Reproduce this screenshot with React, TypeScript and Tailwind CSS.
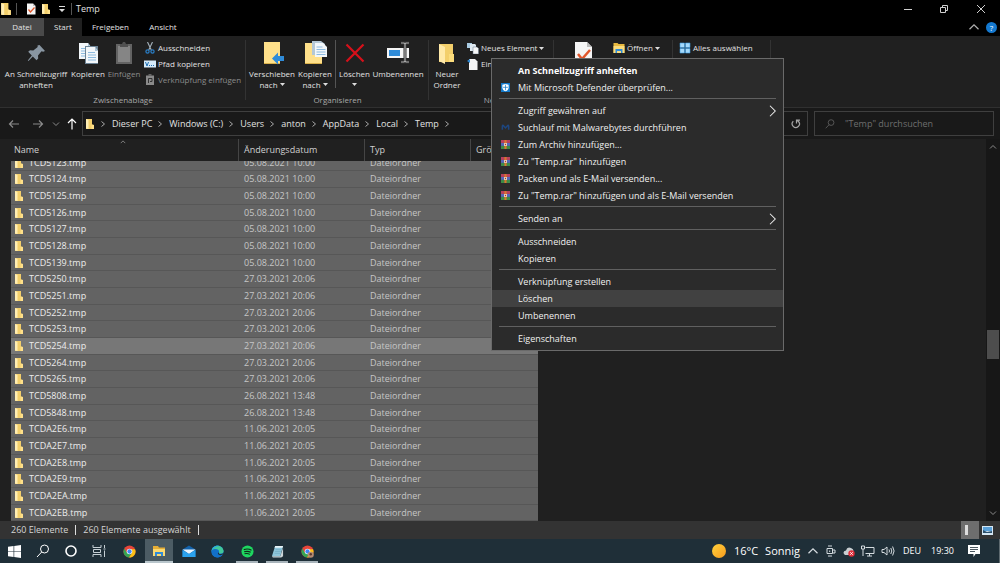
import { useLayoutEffect, useRef } from "react";
import type { ReactNode } from "react";

const rows = [
  ["TCD5123.tmp", "05.08.2021 10:00"],
  ["TCD5124.tmp", "05.08.2021 10:00"],
  ["TCD5125.tmp", "05.08.2021 10:00"],
  ["TCD5126.tmp", "05.08.2021 10:00"],
  ["TCD5127.tmp", "05.08.2021 10:00"],
  ["TCD5128.tmp", "05.08.2021 10:00"],
  ["TCD5139.tmp", "05.08.2021 10:00"],
  ["TCD5250.tmp", "27.03.2021 20:06"],
  ["TCD5251.tmp", "27.03.2021 20:06"],
  ["TCD5252.tmp", "27.03.2021 20:06"],
  ["TCD5253.tmp", "27.03.2021 20:06"],
  ["TCD5254.tmp", "27.03.2021 20:06"],
  ["TCD5264.tmp", "27.03.2021 20:06"],
  ["TCD5265.tmp", "27.03.2021 20:06"],
  ["TCD5808.tmp", "26.08.2021 13:48"],
  ["TCD5848.tmp", "26.08.2021 13:48"],
  ["TCDA2E6.tmp", "11.06.2021 20:05"],
  ["TCDA2E7.tmp", "11.06.2021 20:05"],
  ["TCDA2E8.tmp", "11.06.2021 20:05"],
  ["TCDA2E9.tmp", "11.06.2021 20:05"],
  ["TCDA2EA.tmp", "11.06.2021 20:05"],
  ["TCDA2EB.tmp", "11.06.2021 20:05"],
];

const path = ["Dieser PC", "Windows (C:)", "Users", "anton", "AppData", "Local", "Temp"];

/* ---------- icons ---------- */

const Folder = ({ className = "h-2.5 w-2.5" }: { className?: string }) => (
  <svg viewBox="0 0 10 10" className={`shrink-0 ${className}`}>
    <path d="M1 0h6v5.500l2 .5v4H1z" fill="#f3cf6b" />
    <path d="M1 0l2.500 1v9L1 9.500z" fill="#ffeeb5" />
    <path d="M6.500 5.500L9 6v4H6.500z" fill="#ffe08a" />
  </svg>
);

const Pin = () => (
  <svg viewBox="0 0 24 24" className="h-6 w-6">
    <path d="M15.500 4l5.500 6-1.800.8-1.700-.5-3.500 4.200.2 3-1.700 1.700-3.700-3.700L4.500 20l-.7-.6 4-5-3.600-3.700L6 9.200l3.300.2 4.400-3.400-.2-1.500z" fill="#8996a2" />
  </svg>
);

const Page = ({ x, y }: { x: number; y: number }) => (
  <g transform={`translate(${x} ${y})`}>
    <path d="M0 0h9l3 4v12H0z" fill="#f3f7fa" />
    <path d="M9 0v4h3z" fill="#a9c3d6" />
    <path d="M2 5.500h7M2 8h8M2 10.500h8M2 13h8" stroke="#8dbbe0" fill="none" />
  </g>
);

const Copy = () => (
  <svg viewBox="0 0 24 24" className="h-6 w-6">
    <Page x={3} y={2} />
    <path d="M9 5h13v18H9z" fill="#6d8496" />
    <Page x={10} y={6} />
  </svg>
);

const Clipboard = () => (
  <svg viewBox="0 0 24 24" className="h-6 w-6">
    <path d="M4 3h16v20H4z" fill="#636363" />
    <path d="M6 5h12v16H6z" fill="#858585" />
    <path d="M8 3h2l1-2h2l1 2h2v3H8z" fill="#505050" />
  </svg>
);

const MoveTo = () => (
  <svg viewBox="0 0 24 24" className="h-6 w-6">
    <path d="M4 1h16v22H4z" fill="#ffe08a" />
    <path d="M4 22h16v1H4z" fill="#d9b04a" />
    <path d="M12 17.500l6-6v3.500h6v5h-6v3.500z" fill="#2f8bd8" />
  </svg>
);

const CopyTo = () => (
  <svg viewBox="0 0 24 24" className="h-6 w-6">
    <path d="M2 2h17v21H2z" fill="#ffe08a" />
    <path d="M2 22h17v1H2z" fill="#d9b04a" />
    <path d="M9 0h9l4 3v11H9z" fill="#b5c8d6" />
    <path d="M12 2h8l4 4v10H12z" fill="#f3f7fa" />
    <path d="M13.500 6h6M13.500 8.500h9M13.500 11h9M13.500 13.500h9" stroke="#8dbbe0" />
  </svg>
);

const Cross = () => (
  <svg viewBox="0 0 24 24" className="h-6 w-6">
    <path d="M3.500 3.500l17 17M20.500 3.500l-17 17" stroke="#d8101a" strokeWidth="2.200" />
  </svg>
);

const Rename = () => (
  <svg viewBox="0 0 24 24" className="h-6 w-6">
    <path d="M1 7h22v10H1z" fill="#f5f5f5" />
    <path d="M3 9h11v6H3z" fill="#2f8bd8" />
    <path d="M15 2h3l1 1 1-1h3M15 21h3l1-1 1 1h3M19 3v17" stroke="#333" strokeWidth="3" fill="none" />
    <path d="M15 2h3l1 1 1-1h3M15 21h3l1-1 1 1h3M19 3v17" stroke="#aaa" strokeWidth="1.200" fill="none" />
  </svg>
);

const NewFolder = () => (
  <svg viewBox="0 0 24 24" className="h-6 w-6">
    <path d="M4 3h14v13h1v5H4z" fill="#f3cf6b" />
    <path d="M4 3l6 3v17l-6-3z" fill="#ffe9a8" />
    <path d="M14 13h5v8h-5z" fill="#fbdc7c" />
  </svg>
);

const CheckPage = ({ className = "h-6 w-6" }: { className?: string }) => (
  <svg viewBox="0 0 24 24" className={className}>
    <path d="M4 1h12l5 5v17H4z" fill="#f5f5f5" />
    <path d="M16 1v5h5z" fill="#bbb" />
    <path d="M7 13l4 5 8-9" stroke="#e2572b" strokeWidth="2.500" fill="none" />
  </svg>
);

const Scissors = () => (
  <svg viewBox="0 0 12 12" className="h-3 w-3 shrink-0">
    <path d="M3.500 0l3.800 8M8.500 0L4.700 8" stroke="#a5b2bc" strokeWidth="1.100" />
    <circle cx="3.500" cy="9.500" r="1.600" stroke="#2a7fc8" strokeWidth="1.200" fill="none" />
    <circle cx="8.500" cy="9.500" r="1.600" stroke="#2a7fc8" strokeWidth="1.200" fill="none" />
  </svg>
);

const PathIcon = () => (
  <svg viewBox="0 0 12 12" className="h-3 w-3 shrink-0">
    <path d="M0 2.500h12v7H0z" fill="#d6ebfa" />
    <path d="M1.500 4l1.500 4L4.500 4" stroke="#1d6fb5" fill="none" />
    <path d="M5 7.500h1M7 7.500h1M9 7.500h1" stroke="#1d6fb5" />
  </svg>
);

const PasteLink = () => (
  <svg viewBox="0 0 12 12" className="h-3 w-3 shrink-0">
    <path d="M2 1.500h8V11H2z" fill="#8a8a8a" />
    <path d="M4.500 0h3v2h-3z" fill="#666" />
    <path d="M4.500 9V4.500H8V7.500H6" stroke="#333" fill="none" />
  </svg>
);

const NewItem = () => (
  <svg viewBox="0 0 12 12" className="h-3 w-3 shrink-0">
    <path d="M0 1h5v5H0z" fill="#a9cbe2" />
    <path d="M3 2h5l1 1v6H3z" fill="#dfeaf2" />
    <path d="M6 5h4l1.500 1.500V12H6z" fill="#f7f7f7" stroke="#678" strokeWidth=".5" />
  </svg>
);

const EasyAccess = () => (
  <svg viewBox="0 0 12 12" className="h-3 w-3 shrink-0">
    <path d="M2 1h6l2.500 2.500V12H2z" fill="#f5f5f5" />
    <path d="M0 3l3-2v4z" fill="#2f8bd8" />
  </svg>
);

const OpenFolder = () => (
  <svg viewBox="0 0 12 12" className="h-3 w-3 shrink-0">
    <path d="M.5 1h4l1 1h6v9H.5z" fill="#e8b93f" />
    <path d="M.5 4h11v7H.5z" fill="#fbdc7c" />
    <path d="M2.500 11V7h7v4H8V9H4v2z" fill="#2f8bd8" />
  </svg>
);

const SelectAll = () => (
  <svg viewBox="0 0 12 12" className="h-3 w-3 shrink-0">
    <path d="M1 1h4.500v4.500H1zM6.500 1H11v4.500H6.500zM1 6.500h4.500V11H1zM6.500 6.500H11V11H6.500z" fill="#a5dafc" stroke="#3b9be0" strokeWidth=".6" />
  </svg>
);

const Shield = () => (
  <svg viewBox="0 0 10 10" className="h-[9px] w-[9px]">
    <path d="M0 0h10v10H0z" fill="#1479c9" />
    <path d="M5 1l3.500 1v3Q8.500 8 5 9.200 1.500 8 1.500 5V2z" fill="#fff" />
    <path d="M5 2v6M2.300 4.800h5.400" stroke="#1479c9" strokeWidth=".8" />
  </svg>
);

const Malware = () => (
  <svg viewBox="0 0 10 10" className="h-[9px] w-[9px]">
    <path d="M1.500 7.500V4q0-2 1.300-1L5 5.500 7.200 3Q8.500 2 8.500 4v3.500" stroke="#1d4680" strokeWidth="1.700" fill="none" />
  </svg>
);

const Rar = () => (
  <svg viewBox="0 0 10 10" className="h-[9px] w-[9px]">
    <path d="M0 0h10v3.300H0z" fill="#b8405c" />
    <path d="M0 3.300h10v3.300H0z" fill="#5566b8" />
    <path d="M0 6.600h10V10H0z" fill="#3c8a46" />
    <path d="M3.800 0h2.400v10H3.800z" fill="#d8762e" />
    <path d="M3.300 3.500h3.400v3H3.300z" fill="#f3e0c0" />
    <path d="M4.300 4.300h1.400v1.400H4.300z" fill="#a33" />
  </svg>
);

const Chevron = ({ d, className = "h-2 w-2", stroke = 1 }: { d: string; className?: string; stroke?: number }) => (
  <svg viewBox="0 0 8 8" className={`shrink-0 ${className}`} fill="none" stroke="currentColor" strokeWidth={stroke}>
    <path d={d} />
  </svg>
);

const RIGHT = "M2.500 1.500L5.500 4l-3 2.500";
const UP = "M1 5.500l3-3 3 3";
const DOWN = "M1 2.500l3 3 3-3";

const Magnifier = ({ className }: { className: string }) => (
  <svg viewBox="0 0 14 14" className={className} fill="none" stroke="currentColor">
    <circle cx="8.500" cy="5" r="4" />
    <path d="M5.700 8L1 13" />
  </svg>
);

const Chrome = ({ badge = false }: { badge?: boolean }) => (
  <svg viewBox="0 0 14 14" className="h-[13px] w-[13px]">
    <circle cx="7" cy="7" r="6.500" fill="#e5453a" />
    <path d="M1.400 3.700A6.500 6.500 0 0 0 6.500 13.500L9.600 8.500 4.400 8.500z" fill="#35a552" />
    <path d="M13 4.500H7l2.700 4L6.500 13.500A6.500 6.500 0 0 0 13 4.500z" fill="#fbc116" />
    <circle cx="7" cy="7" r="3" fill="#fff" />
    <circle cx="7" cy="7" r="2.300" fill="#4285f4" />
    {badge && <circle cx="10.500" cy="10.500" r="3.300" fill="#b58a72" />}
    {badge && <circle cx="10.500" cy="10" r="1.300" fill="#5b3a2c" />}
  </svg>
);

/* ---------- ribbon ---------- */

const Triangle = () => (
  <svg viewBox="0 0 5 3" className="inline-block h-[3px] w-[5px] shrink-0">
    <path d="M0 0h5L2.500 3z" fill="#ddd" />
  </svg>
);

const Big = ({ icon, lines, arrow, width, dim }: { icon: ReactNode; lines: string[]; arrow?: boolean; width: string; dim?: boolean }) => (
  <button className={`flex shrink-0 flex-col items-center pt-px whitespace-nowrap ${width} ${dim ? "text-[#8c8c8c]" : "text-[#e2e2e2]"}`}>
    {icon}
    <span className="mt-[3px] leading-[11px]">{lines[0]}</span>
    <span className="flex h-[11px] items-center gap-0.5 leading-[11px]">
      {lines[1]}
      {arrow && <Triangle />}
    </span>
  </button>
);

const Small = ({ icon, label, arrow, dim }: { icon: ReactNode; label: string; arrow?: boolean; dim?: boolean }) => (
  <button className={`flex h-4 items-center gap-0.5 whitespace-nowrap ${dim ? "text-[#8c8c8c]" : "text-[#e2e2e2]"}`}>
    {icon}
    {label}
    {arrow && <Triangle />}
  </button>
);

const Group = ({ label, width, children }: { label: string; width: string; children?: ReactNode }) => (
  <section className={`relative flex shrink-0 flex-col ${width}`}>
    <div className="flex h-[57px] pt-1">{children}</div>
    <p className="text-center leading-[14px] text-[#a8a8a8]">{label}</p>
    <span className="absolute top-1 right-0 h-[60px] w-px bg-[#333]" />
  </section>
);

const Ribbon = () => (
  <div className="flex h-[72px] shrink-0 overflow-hidden border-b border-[#303030] bg-[#202020] text-[8px]">
    <Group label="Zwischenablage" width="w-[246px]">
      <Big icon={<Pin />} lines={["An Schnellzugriff", "anheften"]} width="ml-[2px] w-[68px]" />
      <Big icon={<Copy />} lines={["Kopieren"]} width="w-[36px]" />
      <Big icon={<Clipboard />} lines={["Einfügen"]} width="w-[36px]" dim />
      <div className="ml-[2px]">
        <Small icon={<Scissors />} label="Ausschneiden" />
        <Small icon={<PathIcon />} label="Pfad kopieren" />
        <Small icon={<PasteLink />} label="Verknüpfung einfügen" dim />
      </div>
    </Group>
    <Group label="Organisieren" width="w-[183px]">
      <Big icon={<MoveTo />} lines={["Verschieben", "nach"]} width="ml-[3px] w-[46px]" arrow />
      <Big icon={<CopyTo />} lines={["Kopieren", "nach"]} width="w-[40px]" arrow />
      <span className="h-12 w-px bg-[#555]" />
      <Big icon={<Cross />} lines={["Löschen", ""]} width="w-[37px]" arrow />
      <Big icon={<Rename />} lines={["Umbenennen"]} width="w-[50px]" />
    </Group>
    <Group label="Neu" width="w-[125px]">
      <Big icon={<NewFolder />} lines={["Neuer", "Ordner"]} width="w-[36px]" />
      <div className="ml-[2px]">
        <Small icon={<NewItem />} label="Neues Element" arrow />
        <Small icon={<EasyAccess />} label="Ein" />
      </div>
    </Group>
    <Group label="" width="w-[119px]">
      <Big icon={<CheckPage />} lines={[]} width="w-[58px]" />
      <div className="ml-px">
        <Small icon={<OpenFolder />} label="Öffnen" arrow />
      </div>
    </Group>
    <Group label="" width="w-[98px]">
      <div className="ml-[6px]">
        <Small icon={<SelectAll />} label="Alles auswählen" />
      </div>
    </Group>
  </div>
);

/* ---------- context menu ---------- */

type Item = { label: string; icon?: ReactNode; sub?: boolean; bold?: boolean; active?: boolean };

const menu: Item[][] = [
  [
    { label: "An Schnellzugriff anheften", bold: true },
    { label: "Mit Microsoft Defender überprüfen...", icon: <Shield /> },
  ],
  [
    { label: "Zugriff gewähren auf", sub: true },
    { label: "Suchlauf mit Malwarebytes durchführen", icon: <Malware /> },
    { label: "Zum Archiv hinzufügen...", icon: <Rar /> },
    { label: 'Zu "Temp.rar" hinzufügen', icon: <Rar /> },
    { label: "Packen und als E-Mail versenden...", icon: <Rar /> },
    { label: 'Zu "Temp.rar" hinzufügen und als E-Mail versenden', icon: <Rar /> },
  ],
  [{ label: "Senden an", sub: true }],
  [{ label: "Ausschneiden" }, { label: "Kopieren" }],
  [{ label: "Verknüpfung erstellen" }, { label: "Löschen", active: true }, { label: "Umbenennen" }],
  [{ label: "Eigenschaften" }],
];

const ContextMenu = () => (
  <div role="menu" className="absolute top-[58px] left-[491px] z-20 w-[293px] border border-[#6a6a6a] bg-[#2b2b2b] py-[3px] text-[#f0f0f0]">
    {menu.map((group, i) => (
      <div key={i}>
        {i > 0 && <hr className="mx-[7px] mt-[2px] mb-[3px] border-[#606060]" />}
        {group.map((item) => (
          <button
            key={item.label}
            role="menuitem"
            className={`flex h-[17px] w-full items-center pr-1 text-left whitespace-nowrap ${item.bold ? "font-bold text-white" : ""} ${item.active ? "bg-[#414141]" : ""}`}
          >
            <span className="flex w-[26px] justify-center">{item.icon}</span>
            <span className="flex-1">{item.label}</span>
            {item.sub && <Chevron d="M2 .5L5.500 4 2 7.500" className="h-3 w-3" stroke={0.7} />}
          </button>
        ))}
      </div>
    ))}
  </div>
);

/* ---------- file list ---------- */

const FileList = () => {
  const scroller = useRef<HTMLDivElement>(null);

  // the list opens scrolled to its last entry
  useLayoutEffect(() => {
    if (scroller.current) scroller.current.scrollTop = scroller.current.scrollHeight;
  }, []);

  return (
    <main className="flex min-h-0 flex-1 bg-[#202020]">
      <div ref={scroller} className="min-w-0 flex-1 overflow-hidden pl-[11px]">
        <table className="w-[527px] table-fixed border-separate border-spacing-0 text-left">
          <thead className="sticky top-0 z-10 bg-[#202020] text-[#d0d0d0]">
            <tr className="h-[22px]">
              <th className="relative w-[228px] border-r border-[#454545] pl-[3px] font-normal">
                Name
                <Chevron d={UP} className="absolute top-0 left-[109px] h-1.5 w-1.5 text-[#999]" />
              </th>
              <th className="w-[126px] border-r border-[#454545] pl-[5px] font-normal">Änderungsdatum</th>
              <th className="w-[106px] border-r border-[#454545] pl-[5px] font-normal">Typ</th>
              <th className="pl-[5px] font-normal">Größe</th>
            </tr>
          </thead>
          <tbody className="text-[#c6c6c6]">
            {rows.map(([name, date]) => (
              <tr
                key={name}
                className={`h-[17px] leading-[14px] nth-[3n+1]:h-4 *:border-b *:border-[#575757] ${name === "TCD5254.tmp" ? "bg-[#777]" : "bg-[#636363]"}`}
              >
                <td className="pl-[3px] text-[#ececec]">
                  <span className="flex items-center gap-[5px]">
                    <Folder />
                    {name}
                  </span>
                </td>
                <td className="pl-[5px]">{date}</td>
                <td className="pl-[5px]">Dateiordner</td>
                <td />
              </tr>
            ))}
          </tbody>
        </table>
      </div>
      <div className="flex w-3.5 flex-col items-center bg-[#171717] py-1 text-[#8a8a8a]">
        <Chevron d={UP} />
        <span className="mt-[179px] h-[29px] w-3 bg-[#4d4d4d]" />
        <Chevron d={DOWN} className="mt-auto h-2 w-2" />
      </div>
    </main>
  );
};

/* ---------- taskbar ---------- */

const Task = ({ label, children, state = "" }: { label: string; children: ReactNode; state?: string }) => (
  <button aria-label={label} className={`flex h-full items-center justify-center ${state || "w-[30px]"}`}>
    {children}
  </button>
);

const running = "w-[22px] mx-1 border-b-2 border-[#a8b4bb] pt-0.5";

const Taskbar = () => (
  <footer className="flex h-6 shrink-0 items-center bg-[#1f2f38] text-white">
    <Task label="Start" state="w-7">
      <svg viewBox="0 0 14 14" className="h-[13px] w-[13px]" fill="#fff">
        <path d="M0 2l6-.9v5.600H0zM6.700 1L14 0v6.700H6.700zM0 7.400h6V13l-6-.9zM6.700 7.400H14V14l-7.300-1z" />
      </svg>
    </Task>
    <Task label="Suche">
      <Magnifier className="h-3.5 w-3.5" />
    </Task>
    <Task label="Cortana" state="w-[26px]">
      <svg viewBox="0 0 12 12" className="h-3 w-3">
        <circle cx="6" cy="6" r="5" fill="none" stroke="#fff" strokeWidth="1.600" />
      </svg>
    </Task>
    <Task label="Taskansicht">
      <svg viewBox="0 0 14 14" className="h-3.5 w-3.5" fill="none" stroke="#c6d0d5">
        <path d="M1 1v2.500h8V1M1 13v-2.500h8V13M1.500 5.500h7v3h-7zM12.500 1v3M12.500 6.500V13M11.500 5h2" />
      </svg>
    </Task>
    <Task label="Chrome">
      <Chrome />
    </Task>
    <Task label="Explorer" state="w-[28px] mx-px border-b-2 border-[#b9c6cc] bg-[#4c5c64] pt-0.5">
      <svg viewBox="0 0 14 12" className="h-3 w-3.5">
        <path d="M1 1h5l1 1.500h6V11H1z" fill="#e5ae36" />
        <path d="M1 4h12v7H1z" fill="#fbd970" />
        <path d="M3 11V7h8v4H9V9H5v2z" fill="#2f8bd8" />
      </svg>
    </Task>
    <Task label="Mail" state="w-[29px]">
      <svg viewBox="0 0 14 12" className="h-3 w-3.5">
        <path d="M.5 4.500L7 .5l6.500 4V12H.5z" fill="#1262ab" />
        <path d="M.5 4.500h13L7 9z" fill="#e8f5ff" />
        <path d="M.5 5L7 9l6.500-4v7H.5z" fill="#2ba3ee" />
      </svg>
    </Task>
    <Task label="Edge" state="w-[29px]">
      <svg viewBox="0 0 14 14" className="h-[13px] w-[13px]">
        <circle cx="7" cy="7" r="6.500" fill="#1583d8" />
        <path d="M.6 6.500C1.500-.8 12-1.500 13.500 6c.3 3-3 4-5 2.500C10 6 6 3 .6 6.500z" fill="#42c99a" />
        <path d="M.6 6.500C1.200 1.500 6 0 9 1 5 1.500 3 3 .6 6.500z" fill="#2aa8e8" />
        <path d="M.6 6.500C3 3 9.500 4 8.500 8.300 7 9.500 9 11.500 12.500 10.500 8 15.500.5 13.500.6 6.500z" fill="#1270c8" />
        <path d="M8.300 8.300C7 10.300 10 11 13.500 9.500" stroke="#1f2f38" strokeWidth="1.200" fill="none" />
      </svg>
    </Task>
    <Task label="Spotify" state={running}>
      <svg viewBox="0 0 14 14" className="h-[13px] w-[13px]">
        <circle cx="7" cy="7" r="6.500" fill="#1ed760" />
        <path d="M3 5q4.500-1.500 8.300.6M3.400 7.300q4-1.200 7 .6M3.800 9.500q3-.9 5.800.6" stroke="#0f2a1a" strokeWidth="1.200" fill="none" />
      </svg>
    </Task>
    <Task label="Editor" state={running}>
      <svg viewBox="0 0 14 14" className="h-[13px] w-[13px]">
        <path d="M4.500 1H13l-3 11H1z" fill="#8fc6da" />
        <path d="M4.500 1H13l-.6 2H3.800z" fill="#e8f3f7" />
        <path d="M5 5h6M4.400 7h6M3.800 9h6" stroke="#6fa9c0" strokeWidth=".7" />
        <path d="M1 12h9l3-9v9l-2 1.500H2z" fill="#cdd7db" />
      </svg>
    </Task>
    <Task label="Chrome Profil" state={running}>
      <Chrome badge />
    </Task>
    <div className="ml-auto flex items-center text-[11px]">
      <span className="h-3.5 w-3.5 rounded-full bg-linear-to-br from-[#ffd23c] to-[#f59a1c]" />
      <span className="ml-2">16°C</span>
      <span className="ml-[7px]">Sonnig</span>
    </div>
    <div className="ml-[7px] flex items-center gap-1.5 text-[#d5dce0]">
      <Chevron d={UP} className="h-3 w-3" stroke={0.8} />
      <svg viewBox="0 0 12 12" className="h-3 w-3" fill="none" stroke="currentColor">
        <path d="M2 3.500h5.500v5H2zM3 1h4M3 11h4M7.500 5H10v3H7.500M4.700 5.500v1.500" />
      </svg>
      <svg viewBox="0 0 12 12" className="h-3 w-3">
        <path d="M1 9Q-.5 6 3 5.500 4 1.500 8 3q3 1 2.500 4L8 10H2z" fill="#c8cdd0" />
        <circle cx="8.500" cy="8.500" r="3.200" fill="#e0303c" />
        <path d="M7.300 7.300l2.400 2.400M9.700 7.300L7.300 9.700" stroke="#fff" />
      </svg>
      <svg viewBox="0 0 14 12" className="h-3 w-3.5" fill="none" stroke="currentColor">
        <path d="M4.500 2.500h8.500v6H4.500M6 11h5M8.500 8.500V11M.5 1h3v3h-3zM2 4v7" />
      </svg>
      <svg viewBox="0 0 14 12" className="h-3 w-3.5" fill="none" stroke="currentColor">
        <path d="M1 4.500h2L6 2v8L3 7.500H1zM8 4.500q1 1.500 0 3M9.800 3q2 3 0 6M11.600 1.500q3 4.500 0 9" />
      </svg>
    </div>
    <span className="ml-2 w-7">DEU</span>
    <time className="w-[37px]">19:30</time>
    <svg viewBox="0 0 12 12" className="mr-[19px] h-3 w-3">
      <path d="M0 0h12v9H7.500l-2 3V9H0z" fill="#fff" />
      <path d="M2 2.500h8M2 4.500h8M2 6.500h5" stroke="#1f2f38" strokeWidth=".8" />
    </svg>
    <span className="h-full w-px bg-[#5e6a70]" />
  </footer>
);

export default function App() {
  return (
    <div className="relative flex h-screen flex-col overflow-hidden bg-[#191919] font-['Open_Sans','Noto_Sans',sans-serif] text-[9px] text-[#e2e2e2]">
      <header className="flex h-[18px] shrink-0 items-center bg-black">
        <Folder className="h-3 w-3" />
        <span className="ml-1 h-3 w-px bg-[#555]" />
        <CheckPage className="ml-2 h-3 w-3" />
        <Folder className="ml-1 h-2.5 w-2.5" />
        <svg viewBox="0 0 6 6" className="ml-2 h-1.5 w-1.5" fill="#ddd">
          <path d="M0 0h6v1H0zM0 3h6L3 6z" />
        </svg>
        <span className="ml-1.5 h-3 w-px bg-[#555]" />
        <h1 className="ml-1">Temp</h1>
        <div className="ml-auto flex text-[#d0d0d0]">
          <button aria-label="Minimieren" className="flex w-9 justify-center">
            <svg viewBox="0 0 8 8" className="h-2 w-2" stroke="currentColor">
              <path d="M0 4.500h8" />
            </svg>
          </button>
          <button aria-label="Verkleinern" className="flex w-9 justify-center">
            <svg viewBox="0 0 8 8" className="h-2 w-2" fill="none" stroke="currentColor">
              <path d="M.5 2.500h5v5h-5zM2.500 2V.5h5v5H6" />
            </svg>
          </button>
          <button aria-label="Schließen" className="flex w-[38px] justify-center">
            <svg viewBox="0 0 8 8" className="h-2 w-2" stroke="currentColor">
              <path d="M0 0l8 8M8 0L0 8" />
            </svg>
          </button>
        </div>
      </header>

      <nav className="flex h-[18px] shrink-0 items-center bg-black text-[8px]">
        <button className="h-full w-11 bg-[#4a4a4a]">Datei</button>
        <button className="h-full w-[38px] bg-[#202020]">Start</button>
        <button className="w-[57px]">Freigeben</button>
        <button className="w-12">Ansicht</button>
        <Chevron d={UP} className="ml-auto h-3 w-3 text-[#b0b0b0]" stroke={0.8} />
        <button aria-label="Hilfe" className="mr-[3px] ml-1.5 h-[11px] w-[11px] rounded-full bg-[#1479d0] text-center leading-[11px] text-white">
          ?
        </button>
      </nav>

      <Ribbon />

      <div className="flex h-[31px] shrink-0 items-center pr-1.5">
        <div className="flex w-[82px] items-center pl-2 text-[#8a8a8a]">
          <svg viewBox="0 0 12 12" className="h-3 w-3" fill="none" stroke="currentColor" strokeWidth="1.200">
            <path d="M11 6H1.500M5 2.500L1.500 6 5 9.500" />
          </svg>
          <svg viewBox="0 0 12 12" className="ml-3 h-3 w-3" fill="none" stroke="currentColor" strokeWidth="1.200">
            <path d="M1 6h9.500M7 2.500L10.500 6 7 9.500" />
          </svg>
          <Chevron d={DOWN} className="ml-2 h-2 w-2" />
          <svg viewBox="0 0 12 12" className="ml-1.5 h-3 w-3 text-white" fill="none" stroke="currentColor" strokeWidth="1.200">
            <path d="M6 11.500V1M2 5l4-4 4 4" />
          </svg>
        </div>
        <div className="flex h-[25px] flex-1 items-center border border-[#3f3f3f] pl-0.5">
          <Folder />
          {path.map((part) => (
            <span key={part} className="flex items-center">
              <Chevron d={RIGHT} className="mr-[5px] ml-1 h-2 w-2 text-[#aaa]" />
              <a href="#">{part}</a>
            </span>
          ))}
          <Chevron d={RIGHT} className="ml-1 h-2 w-2 text-[#aaa]" />
          <button aria-label="Aktualisieren" className="mr-1.5 ml-auto text-[#a5a5a5]">
            <svg viewBox="0 0 10 10" className="h-2.5 w-2.5" fill="none" stroke="currentColor" strokeWidth="1.200">
              <path d="M2.300 2.300A3.600 3.600 0 1 0 7.500 2.500L6 1.500M5.500 4.500V1.200H9" />
            </svg>
          </button>
        </div>
        <label className="ml-1.5 flex h-[25px] w-[180px] items-center border border-[#3f3f3f] pl-2.5 text-[#6e6e6e]">
          <Magnifier className="h-2.5 w-2.5" />
          <input aria-label="Suchen" placeholder={'"Temp" durchsuchen'} className="ml-2.5 w-32 bg-transparent outline-none placeholder:text-[#6e6e6e]" />
        </label>
      </div>

      <FileList />

      <div className="flex h-[18px] shrink-0 items-center bg-[#333] pl-[11px] text-[#d5d5d5]">
        260 Elemente
        <span className="mx-[7px] h-2.5 w-px bg-[#ddd]" />
        260 Elemente ausgewählt
        <span className="mx-[7px] h-2.5 w-px bg-[#ddd]" />
        <button aria-label="Details" className="ml-auto flex h-full w-[18px] items-center bg-[#6e6e6e] pl-1">
          <span className="h-2.5 w-[3px] bg-[#ddd]" />
        </button>
        <button aria-label="Große Symbole" className="mr-[7px] ml-[3px]">
          <svg viewBox="0 0 11 9" className="h-[9px] w-[11px]">
            <path d="M0 0h11v9H0z" fill="#d5e6f2" />
            <path d="M1 1h9v4H1z" fill="#5aa0d8" />
            <path d="M1 4l4 2 5-1v2H1z" fill="#2b4f6b" />
          </svg>
        </button>
      </div>

      <Taskbar />

      <ContextMenu />
    </div>
  );
}
